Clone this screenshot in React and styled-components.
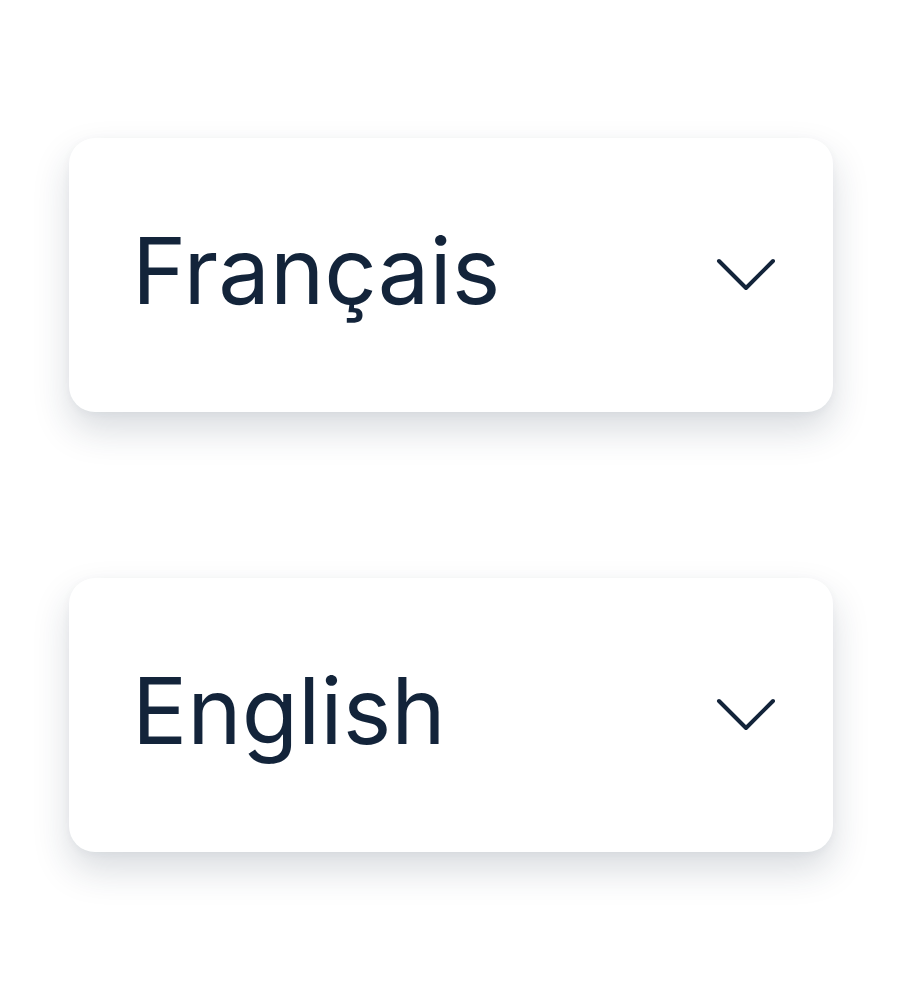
import React from 'react'
import styled, { createGlobalStyle } from 'styled-components'

const GlobalStyle = createGlobalStyle`
  html, body {
    margin: 0;
    padding: 0;
    background: #ffffff;
  }
  body {
    font-family: Inter, "Liberation Sans", sans-serif;
  }
`

const Page = styled.div`
  width: 902px;
  height: 990px;
  box-sizing: border-box;
  padding: 138px 0 0 69px;
  display: flex;
  flex-direction: column;
  gap: 166px;
  background: #ffffff;
`

const Select = styled.div`
  width: 764px;
  height: 274px;
  box-sizing: border-box;
  padding: 0 57px 0 63px;
  display: flex;
  align-items: center;
  justify-content: space-between;
  background: #ffffff;
  border-radius: 26px;
  box-shadow: 0 18px 36px rgba(30, 45, 70, 0.17), 0 2px 10px rgba(30, 45, 70, 0.04);
`

const Label = styled.span`
  font-family: Inter, "Liberation Sans", sans-serif;
  font-size: 92px;
  font-weight: 400;
  letter-spacing: 0;
  color: #13243a;
  line-height: 1;
  margin-top: ${props => props.shift || 0}px;
`

const Chevron = () => (
  <svg width="60" height="34" viewBox="0 0 60 34" fill="none">
    <polyline
      points="3,3 30,30 57,3"
      stroke="#13243a"
      strokeWidth="4"
      strokeLinecap="round"
      strokeLinejoin="round"
    />
  </svg>
)

const options = ['Français', 'English']

export default function App() {
  return (
    <>
      <GlobalStyle />
      <Page>
        {options.map(name => (
          <Select key={name}>
            <Label shift={-8}>{name}</Label>
            <Chevron />
          </Select>
        ))}
      </Page>
    </>
  )
}
